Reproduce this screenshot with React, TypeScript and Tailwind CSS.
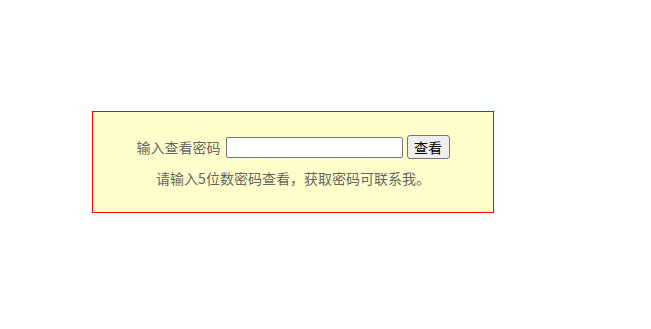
import React from "react";

export default function App() {
  return (
    <div
      className="w-[651px] h-[329px] bg-white pt-[111px] pl-[92px]"
      style={{ fontFamily: '"Noto Sans CJK SC", "Microsoft YaHei", sans-serif' }}
    >
      <div className="w-[402px] h-[102px] border border-[#ff0000] bg-[#ffffcc] flex flex-col items-center pt-[23px]">
        <div className="flex items-center h-[24px]">
          <span className="text-[14px] leading-[20px] text-[#666666]">输入查看密码</span>
          <input
            type="text"
            className="ml-[5px] w-[177px] h-[21px] border border-[#767676] rounded-[2px] bg-white outline-none"
          />
          <button className="ml-[4px] w-[43px] h-[24px] border border-[#767676] rounded-[3px] bg-[#efefef] text-[14px] leading-[20px] text-black">
            查看
          </button>
        </div>
        <div className="mt-[9px] text-[14px] leading-[20px] text-[#666666]">
          请输入5位数密码查看，获取密码可联系我。
        </div>
      </div>
    </div>
  );
}
